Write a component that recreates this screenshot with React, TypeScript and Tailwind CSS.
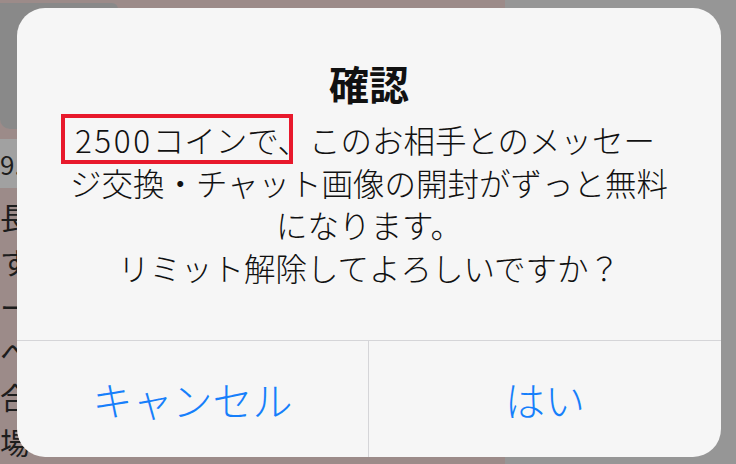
import { ReactNode } from "react";

const JP = { fontFamily: '"Noto Sans CJK JP", "Noto Sans", sans-serif' };

function SideLine({ children }: { children: ReactNode }) {
  return <div className="h-[45px] text-[30px] leading-[45px] text-[#1d1d1d]">{children}</div>;
}

function Backdrop() {
  return (
    <div className="flex h-full w-full bg-[#969696]">
      <div className="flex w-[505px] flex-col bg-[#9c8b89] pt-[3px]">
        <div className="h-[127px] w-[118px] rounded-b-[10px] rounded-tr-[6px] bg-[#898989]" />
        <div className="mt-[10px] flex h-[50px] items-center bg-[#a1a1a1] text-[26px] text-[#1d1d1d]">9.</div>
        <div className="pt-[6px]">
          <SideLine>長</SideLine>
          <SideLine>す</SideLine>
          <SideLine>ー</SideLine>
          <SideLine>へ</SideLine>
          <SideLine>合</SideLine>
          <SideLine>場.</SideLine>
        </div>
      </div>
      <div className="flex-1" />
    </div>
  );
}

function AlertDialog() {
  return (
    <div className="absolute left-[17px] top-[8px] flex h-[449px] w-[704px] flex-col overflow-hidden rounded-[28px] bg-[#f6f6f6]">
      <div className="flex h-[333px] flex-col items-center border-b border-[#d5d5d8] pt-[51px] text-[#111]">
        <div className="text-[40px] font-bold leading-[48px]">確認</div>
        <div className="mt-[11px] text-center text-[31.5px] font-light leading-[42.5px]">
          <div className="pr-[8px]">
            <span className="relative">
              <span className="tracking-[2.6px]">2500</span>コインで、
              <span className="absolute -left-[14px] top-[-2px] h-[50px] w-[232px] border-4 border-[#e8192c]" />
            </span>
            このお相手とのメッセー
          </div>
          <div>ジ交換・チャット画像の開封がずっと無料</div>
          <div>になります。</div>
          <div>リミット解除してよろしいですか？</div>
        </div>
      </div>
      <div className="grid flex-1 grid-cols-2 text-[40px] font-light text-[#167ffb]">
        <button className="flex items-center justify-center border-r border-[#d5d5d8]">キャンセル</button>
        <button className="flex items-center justify-center">はい</button>
      </div>
    </div>
  );
}

export default function App() {
  return (
    <div className="relative h-[464px] w-[736px] overflow-hidden" style={JP}>
      <Backdrop />
      <AlertDialog />
    </div>
  );
}
